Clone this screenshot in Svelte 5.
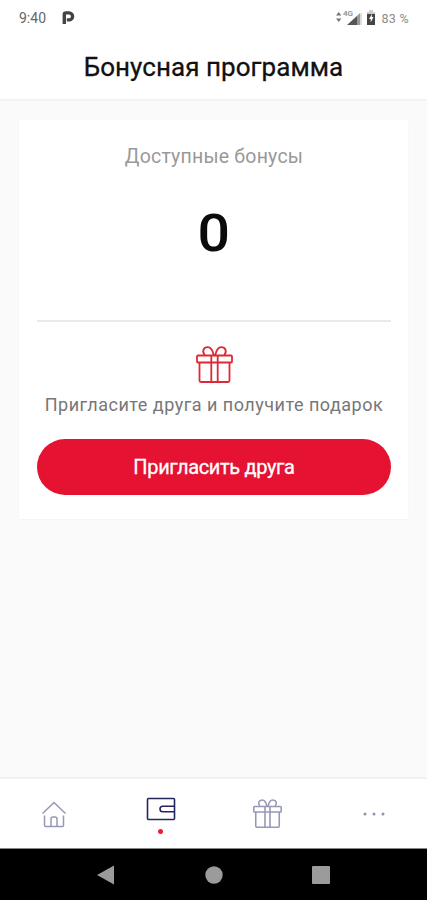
<script>
  let bonuses = $state(0);
  let active = $state('wallet');

  const tabs = [
    { id: 'home', label: 'Главная' },
    { id: 'wallet', label: 'Бонусы' },
    { id: 'gifts', label: 'Подарки' },
    { id: 'more', label: 'Ещё' }
  ];
</script>

{#snippet gift()}
  <path d="M2 9.5h33q1 0 1 1v5q0 1-1 1H2q-1 0-1-1v-5q0-1 1-1z M3.5 16.5v18q0 1.5 1.5 1.5h27q1.5 0 1.5-1.5v-18 M15.3 9.5V36 M21.7 9.5V36" />
  <path d="M17.8 9.5C16.8 4.5 15 1.2 11.7 1.2 7.4 1.2 5.7 5.8 8.8 9 M19.2 9.5c1-5 2.8-8.3 6.1-8.3 4.3 0 6 4.6 2.9 7.8" />
{/snippet}

<div class="screen">
  <div class="status-bar">
    <span class="time">9:40</span>
    <svg class="parking" width="14" height="16" viewBox="0 0 14 16" aria-hidden="true">
      <path d="M3.3 14V4.5Q3.3 2.9 5 2.9h3.1a3.5 3.5 0 0 1 0 7H5.8" />
    </svg>
    <svg class="signals" width="43" height="20" viewBox="0 0 43 20" aria-hidden="true">
      <path fill="#777" d="M1 8.5 3.7 5l2.7 3.5zM1 11.5h5.4L3.7 15z" />
      <text x="8" y="9">4G</text>
      <path fill="#ddd" d="M27 5v13h-6V11z" />
      <path fill="#555" d="M12 18 22.5 8.5V18z" />
      <path fill="#999" d="M22.5 8.5 25 6v12h-2.5z" />
      <path fill="#ccc" d="M34 3h4v2h2v3h-8V5h2z" />
      <path fill="#444" d="M32 7h8v11h-8z" />
      <path fill="#fff" d="m37 7-3 5h1.7v3.5l2.8-5.5h-1.7z" />
    </svg>
    <span class="percent">83 %</span>
  </div>

  <header>
    <h1>Бонусная программа</h1>
  </header>

  <main>
    <section class="card">
      <p class="caption">Доступные бонусы</p>
      <div class="amount">{bonuses}</div>
      <hr />
      <svg class="gift" width="37" height="37" viewBox="0 0 37 37" aria-hidden="true">
        {@render gift()}
      </svg>
      <p class="invite">Пригласите друга и получите подарок</p>
      <button class="primary">Пригласить друга</button>
    </section>
  </main>

  <nav class="tabs">
    {#each tabs as tab (tab.id)}
      <button
        class="tab"
        class:active={active === tab.id}
        aria-label={tab.label}
        onclick={() => (active = tab.id)}
      >
        {#if tab.id === 'home'}
          <svg width="26" height="28" viewBox="0 0 26 28" aria-hidden="true">
            <path d="M1.5 13.5 13 2.5l11.5 11 M3.5 15.5v10q0 1 1 1h17q1 0 1-1v-10 M10 26V19q0-2 2-2h2q2 0 2 2v7" />
          </svg>
        {:else if tab.id === 'wallet'}
          <svg width="30" height="24" viewBox="0 0 30 24" aria-hidden="true">
            <path d="M2.5 1.5h25q1 0 1 1v19q0 1-1 1h-25q-1 0-1-1v-19q0-1 1-1z M28.5 9.2H16.8q-2.8 0-2.8 2.8t2.8 2.8h11.7" />
          </svg>
        {:else if tab.id === 'gifts'}
          <svg class="present" width="29" height="29" viewBox="0 0 37 37" aria-hidden="true">
            {@render gift()}
          </svg>
        {:else}
          <svg class="dots" width="24" height="6" viewBox="0 0 24 6" aria-hidden="true">
            <circle cx="3" cy="3" r="1.5" />
            <circle cx="12" cy="3" r="1.5" />
            <circle cx="21" cy="3" r="1.5" />
          </svg>
        {/if}
        {#if active === tab.id}
          <span class="marker"></span>
        {/if}
      </button>
    {/each}
  </nav>

  <div class="system-bar">
    <svg width="20" height="20" viewBox="0 0 20 20" aria-hidden="true"><path d="M18 .5v19L1 10z" /></svg>
    <svg width="20" height="20" viewBox="0 0 20 20" aria-hidden="true"><circle cx="10" cy="10" r="8.7" /></svg>
    <svg width="20" height="20" viewBox="0 0 20 20" aria-hidden="true"><rect x="1" y="1" width="18" height="18" rx="1" /></svg>
  </div>
</div>

<style>
  :global(body) { margin: 0; background: #fafafa; }

  .screen {
    display: flex;
    flex-direction: column;
    height: 900px;
    font-family: Roboto, sans-serif;
    background: #fafafa;
  }

  .status-bar {
    box-sizing: border-box;
    display: flex;
    align-items: center;
    height: 36px;
    padding: 0 18px 0 19px;
    background: #fff;
  }
  .time { font-size: 14px; color: #666; }
  .parking { margin-left: 15px; fill: none; stroke: #444; stroke-width: 3.4; }
  .signals { margin: -2px 0 0 auto; }
  .signals text { font-size: 8px; font-weight: 500; fill: #888; }
  .percent { margin-left: 3px; font-size: 12.5px; letter-spacing: 0.3px; color: #8c8c8c; }

  header {
    box-sizing: border-box;
    height: 65px;
    background: #fff;
    border-bottom: 2px solid #f3f3f3;
  }
  h1 {
    margin: 0;
    font-size: 26px;
    font-weight: 400;
    line-height: 62px;
    letter-spacing: 0.05px;
    text-align: center;
    color: #111;
    -webkit-text-stroke: 0.3px #111;
  }

  main { flex: 1; padding: 19px 19px 0; }
  .card {
    box-sizing: border-box;
    display: flex;
    flex-direction: column;
    align-items: center;
    height: 399px;
    padding: 25px 17px 0 18px;
    background: #fff;
    box-shadow: 0 1px 2px rgba(0, 0, 0, 0.03);
  }
  p { margin: 0; line-height: 24px; white-space: nowrap; }
  .caption { font-size: 19.5px; letter-spacing: 0.2px; color: #999; }
  .amount {
    margin-top: 35px;
    font-size: 52px;
    font-weight: 500;
    line-height: 60px;
    color: #0b0b0b;
    transform: scaleX(1.1);
  }
  hr {
    width: 100%;
    height: 2px;
    margin: 56px 0 24px;
    border: 0;
    background: #e9e9e9;
  }
  .gift {
    flex-shrink: 0;
    fill: none;
    stroke: #de2836;
    stroke-width: 1.8;
  }
  .invite { margin-top: 10px; font-size: 18px; letter-spacing: 0.5px; color: #777; }
  .primary {
    width: 100%;
    height: 56px;
    margin-top: 22px;
    padding: 0;
    border: 0;
    border-radius: 28px;
    font: 400 20px Roboto, sans-serif;
    letter-spacing: -0.35px;
    color: #fff;
    background: #e51232;
    -webkit-text-stroke: 0.3px #fff;
  }

  .tabs {
    box-sizing: border-box;
    display: grid;
    grid-template-columns: repeat(4, 1fr);
    height: 71px;
    border-top: 2px solid #f1f1f1;
    background: #fff;
  }
  .tab {
    display: flex;
    flex-direction: column;
    align-items: center;
    justify-content: center;
    padding: 0 0 0 1px;
    border: 0;
    background: none;
  }
  .tab svg { fill: none; stroke: #9797b7; stroke-width: 1.5; }
  .tab .present { stroke-width: 2; }
  .tab .dots { fill: #9090b0; stroke: none; }
  .tab.active { padding-top: 4px; }
  .tab.active svg { stroke: #252560; stroke-width: 1.6; }
  .marker {
    width: 5px;
    height: 5px;
    margin-top: 8px;
    border-radius: 50%;
    background: #ef1d32;
  }

  .system-bar {
    box-sizing: border-box;
    display: flex;
    align-items: center;
    justify-content: space-between;
    height: 52px;
    padding: 0 96px;
    border-top: 1px solid #888;
    background: #000;
  }
  .system-bar svg { fill: #9b9b9b; }
</style>
